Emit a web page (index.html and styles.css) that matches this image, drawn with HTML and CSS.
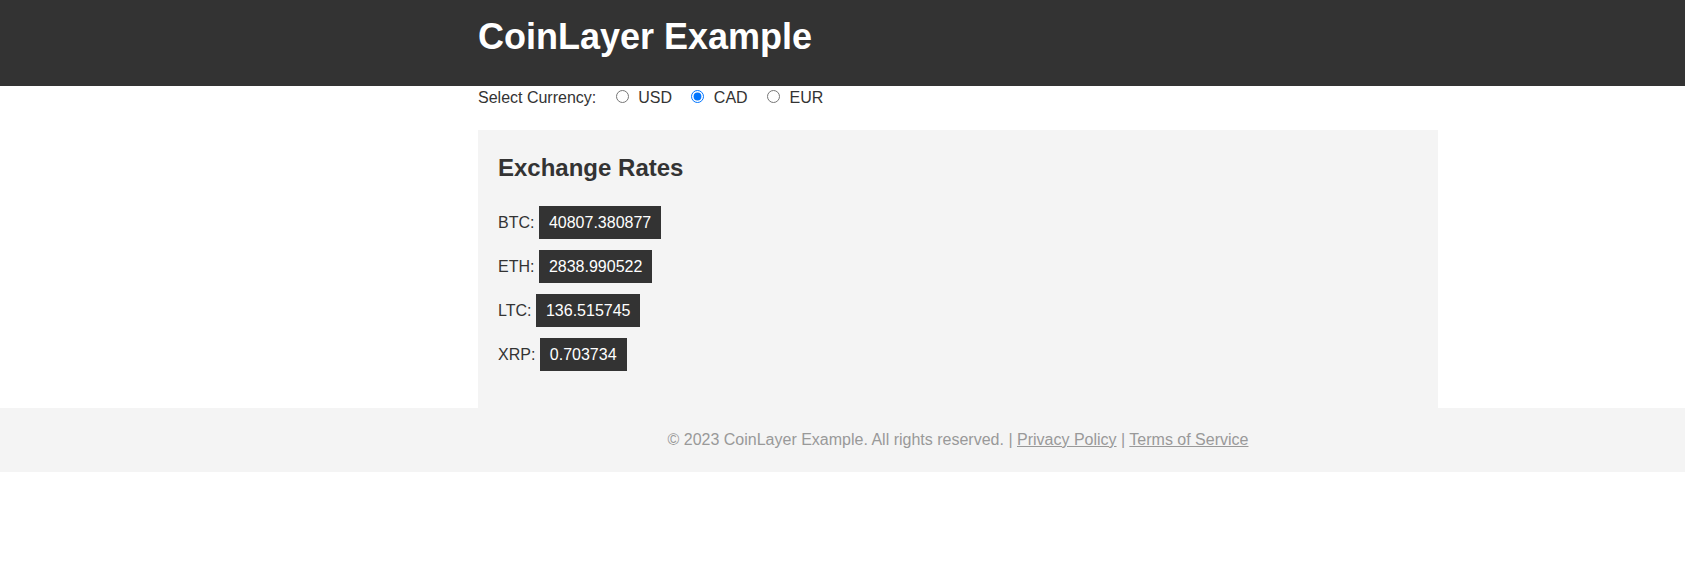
FILE: index.html
```html
<!DOCTYPE html>
<html lang="en">
<head>
<meta charset="utf-8">
<title>CoinLayer Example</title>
<link rel="stylesheet" href="styles.css">
</head>
<body>
<header class="site-header">
  <div class="container">
    <h1 class="site-title">CoinLayer Example</h1>
  </div>
</header>
<main class="container">
  <div class="currency-select">
    <label class="select-label">Select Currency:</label>
    <input class="currency-radio" type="radio" name="currency" id="usd" value="USD"> <label for="usd">USD</label>
    <input class="currency-radio" type="radio" name="currency" id="cad" value="CAD" checked> <label for="cad">CAD</label>
    <input class="currency-radio" type="radio" name="currency" id="eur" value="EUR"> <label for="eur">EUR</label>
  </div>
  <section class="rates">
    <h2 class="rates-title">Exchange Rates</h2>
    <div class="rate">BTC: <span class="rate-value">40807.380877</span></div>
    <div class="rate">ETH: <span class="rate-value">2838.990522</span></div>
    <div class="rate">LTC: <span class="rate-value">136.515745</span></div>
    <div class="rate">XRP: <span class="rate-value">0.703734</span></div>
  </section>
</main>
<footer class="site-footer">
  <div class="container">
    <p class="footer-text">© 2023 CoinLayer Example. All rights reserved. | <a href="#">Privacy Policy</a> | <a href="#">Terms of Service</a></p>
  </div>
</footer>
</body>
</html>
```
FILE: styles.css
```css
html, body {
  margin: 0;
  padding: 0;
}

body {
  font-family: "Liberation Sans", Arial, sans-serif;
  font-size: 16px;
  line-height: 1.5;
  color: #333;
  background: #fff;
}

.container {
  width: 960px;
  margin-left: 478px;
}

.site-header {
  background: #333;
  color: #fff;
  padding: 10px 0 22px;
}

.site-title {
  margin: 0;
  font-size: 36px;
  line-height: 54px;
  font-weight: bold;
}

.currency-select label {
  margin-right: 10px;
}

.currency-radio {
  margin: 3px 5px 0 5px;
}

.rates {
  margin-top: 20px;
  background: #f4f4f4;
  padding: 20px 20px 21px;
}

.rates-title {
  margin: 0 0 25px;
  font-size: 24px;
  line-height: 36px;
}

.rate {
  margin-bottom: 20px;
}

.rate-value {
  background: #333;
  color: #fff;
  padding: 8px 10px;
}

.site-footer {
  background: #f4f4f4;
  padding: 20px 0;
  text-align: center;
  color: #999;
}

.footer-text {
  margin: 0;
}

.footer-text a {
  color: #999;
  text-decoration: underline;
}
```
